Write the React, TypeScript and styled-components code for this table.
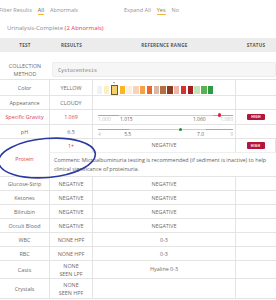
import React from 'react';
import styled, { createGlobalStyle } from 'styled-components';

const COLS = '50px 43px 143px 40px';
const LINE = '#e4e4e4';
const RED = '#e23a52';

const GlobalStyle = createGlobalStyle`
  html, body {
    margin: 0;
    padding: 0;
    background: #ffffff;
  }
  body {
    font-family: 'Open Sans', 'Liberation Sans', sans-serif;
    width: 276px;
    height: 300px;
    overflow: hidden;
  }
`;

const SWATCHES = [
  '#eef4ef',
  '#fcf0c2',
  '#f4d06a',
  '#f9b628',
  '#fdeee2',
  '#f9d3b6',
  '#f6a143',
  '#e6682f',
  '#d8b9a5',
  '#b5703f',
  '#8b3b1f',
  '#f0b6ae',
  '#d8312e',
  '#a61e24',
  '#c4e3b8',
  '#5ab152',
  '#2f9b46',
];
const SELECTED = 2;

type Seg = { w: number; c: string };
type Mark = { t: string; at: number; faint?: boolean; edge?: 'left' | 'right' };

const simpleRows = [
  { test: 'Glucose-Strip', result: 'NEGATIVE', ref: 'NEGATIVE' },
  { test: 'Ketones', result: 'NEGATIVE', ref: 'NEGATIVE' },
  { test: 'Bilirubin', result: 'NEGATIVE', ref: 'NEGATIVE' },
  { test: 'Occult Blood', result: 'NEGATIVE', ref: 'NEGATIVE' },
  { test: 'WBC', result: 'NONE HPF', ref: '0-3' },
  { test: 'RBC', result: 'NONE HPF', ref: '0-3' },
];

const Gauge = ({
  segs,
  dot,
  dotColor,
  marks,
}: {
  segs: Seg[];
  dot: number;
  dotColor: string;
  marks: Mark[];
}) => (
  <GaugeBox>
    <Track>
      {segs.map((s, i) => (
        <TrackSeg key={i} $color={s.c} style={{ width: `${s.w}%` }} />
      ))}
    </Track>
    <Dot $color={dotColor} style={{ left: `${dot}%` }} />
    {marks.map((m) => (
      <GaugeLabel
        key={m.t}
        $faint={m.faint}
        $edge={m.edge}
        style={{ left: `${m.at}%` }}
      >
        {m.t}
      </GaugeLabel>
    ))}
  </GaugeBox>
);

const App = () => {
  return (
    <Page>
      <GlobalStyle />
      <TopBar>
        <Group>
          <FilterText>Filter Results</FilterText>
          <FilterText $active>All</FilterText>
          <FilterText>Abnormals</FilterText>
        </Group>
        <Group>
          <FilterText>Expand All</FilterText>
          <FilterText $active $accent>
            Yes
          </FilterText>
          <FilterText>No</FilterText>
        </Group>
      </TopBar>
      <Title>
        Urinalysis-Complete <span>(2 Abnormals)</span>
      </Title>

      <Table>
        <HeadRow>
          <HeadCell>Test</HeadCell>
          <HeadCell>Results</HeadCell>
          <HeadCell>Reference Range</HeadCell>
          <HeadCell>Status</HeadCell>
        </HeadRow>

        <MethodRow>
          <Cell>
            COLLECTION
            <br />
            METHOD
          </Cell>
          <MethodInput>Cystocentesis</MethodInput>
        </MethodRow>

        <Row $h={16}>
          <Cell>Color</Cell>
          <Cell>YELLOW</Cell>
          <Cell $start>
            <SwatchRow>
              {SWATCHES.map((c, i) => (
                <Swatch key={c} $color={c} $selected={i === SELECTED}>
                  {i === SELECTED && <Caret />}
                </Swatch>
              ))}
            </SwatchRow>
          </Cell>
          <Cell />
        </Row>

        <Row>
          <Cell>Appearance</Cell>
          <Cell>CLOUDY</Cell>
          <Cell />
          <Cell />
        </Row>

        <Row $h={15}>
          <Cell $red>Specific Gravity</Cell>
          <Cell $red>1.069</Cell>
          <Cell $start>
            <Gauge
              segs={[
                { w: 15.5, c: '#ea8a94' },
                { w: 69.5, c: '#b9dcb3' },
                { w: 15, c: '#ea8a94' },
              ]}
              dot={90}
              dotColor="#e0223c"
              marks={[
                { t: '1.000', at: 0, faint: true, edge: 'left' },
                { t: '1.015', at: 21 },
                { t: '1.060', at: 75 },
                { t: '1.080', at: 100, faint: true, edge: 'right' },
              ]}
            />
          </Cell>
          <Cell>
            <Badge>HIGH</Badge>
          </Cell>
        </Row>

        <Row>
          <Cell>pH</Cell>
          <Cell>6.5</Cell>
          <Cell $start>
            <Gauge
              segs={[
                { w: 23, c: '#ea8a94' },
                { w: 57, c: '#b9dcb3' },
                { w: 20, c: '#ea8a94' },
              ]}
              dot={61}
              dotColor="#2a8a36"
              marks={[
                { t: '4', at: 0, faint: true, edge: 'left' },
                { t: '5.5', at: 22 },
                { t: '7.0', at: 76 },
                { t: '9', at: 100, faint: true, edge: 'right' },
              ]}
            />
          </Cell>
          <Cell />
        </Row>

        <ProteinRow>
          <ProteinName>Protein</ProteinName>
          <Cell $red>1+</Cell>
          <Cell $top>NEGATIVE</Cell>
          <Cell>
            <Badge>HIGH</Badge>
          </Cell>
          <Comment>
            Comment: Microalbuminuria testing is recommended (if sediment is
            inactive) to help
            <br />
            clinical significance of proteinuria.
          </Comment>
        </ProteinRow>

        {simpleRows.map((r) => (
          <Row key={r.test}>
            <Cell>{r.test}</Cell>
            <Cell>{r.result}</Cell>
            <Cell>{r.ref}</Cell>
            <Cell />
          </Row>
        ))}

        <Row $h={18}>
          <Cell>Casts</Cell>
          <Cell>
            NONE
            <br />
            SEEN LPF
          </Cell>
          <Cell $up>Hyaline 0-3</Cell>
          <Cell />
        </Row>

        <Row $h={20}>
          <Cell>Crystals</Cell>
          <Cell>
            NONE
            <br />
            SEEN HPF
          </Cell>
          <Cell />
          <Cell />
        </Row>

        <Circle viewBox="0 0 104 46" aria-hidden>
          <ellipse
            cx="52"
            cy="23"
            rx="48.5"
            ry="19.5"
            transform="rotate(-5 52 23)"
            fill="none"
            stroke="#2b3aa0"
            strokeWidth="1.6"
          />
        </Circle>
      </Table>
    </Page>
  );
};

const Page = styled.div`
  width: 276px;
  height: 300px;
  overflow: hidden;
  background: #ffffff;
`;

const TopBar = styled.div`
  display: flex;
  align-items: center;
  gap: 46px;
  height: 18px;
  padding: 2px 0 0 0;
  box-sizing: border-box;
  margin-left: -1px;
`;

const Group = styled.div`
  display: flex;
  align-items: center;
  gap: 6px;
`;

const FilterText = styled.span<{ $active?: boolean; $accent?: boolean }>`
  font-size: 5.5px;
  line-height: 8px;
  color: ${({ $active, $accent }) =>
    $accent ? '#a8741c' : $active ? '#666666' : '#939393'};
  border-bottom: 1px solid
    ${({ $active }) => ($active ? '#f2b441' : 'transparent')};
`;

const Title = styled.div`
  height: 20px;
  padding: 3px 0 0 7px;
  box-sizing: border-box;
  font-size: 6px;
  line-height: 14px;
  color: #8d8d8d;

  span {
    color: ${RED};
  }
`;

const Table = styled.div`
  position: relative;
  width: 276px;
`;

const HeadRow = styled.div`
  display: grid;
  grid-template-columns: ${COLS};
  align-items: center;
  height: 14px;
  background: #ececec;
`;

const HeadCell = styled.div`
  text-align: center;
  text-transform: uppercase;
  font-size: 4.6px;
  font-weight: 700;
  letter-spacing: 0.25px;
  color: #595959;
`;

const Row = styled.div<{ $h?: number }>`
  display: grid;
  grid-template-columns: ${COLS};
  height: ${({ $h }) => $h ?? 14}px;
  border-bottom: 1px solid ${LINE};
  box-sizing: border-box;
`;

const Cell = styled.div<{
  $red?: boolean;
  $start?: boolean;
  $top?: boolean;
  $up?: boolean;
}>`
  display: flex;
  flex-direction: column;
  align-items: ${({ $start }) => ($start ? 'flex-start' : 'center')};
  justify-content: ${({ $top, $up }) =>
    $top ? 'flex-start' : $up ? 'flex-start' : 'center'};
  padding: ${({ $top, $up }) =>
    $top ? '2px 2px 0' : $up ? '4px 2px 0' : '0 2px'};
  text-align: center;
  border-right: 1px solid ${LINE};
  font-size: 5.4px;
  line-height: 8px;
  color: ${({ $red }) => ($red ? RED : '#6a6a6a')};

  &:last-child {
    border-right: none;
  }
`;

const MethodRow = styled.div`
  display: grid;
  grid-template-columns: 50px 1fr;
  height: 28px;
  padding-top: 9px;
  border-bottom: 1px solid ${LINE};
  box-sizing: border-box;

  & > ${Cell} {
    border-right: none;
  }
`;

const MethodInput = styled.div`
  margin: 1px 0 2px 2px;
  padding: 0 5px;
  display: flex;
  align-items: center;
  background: #f6f6f6;
  border: 1px solid #ececec;
  border-radius: 2px;
  font-family: 'DejaVu Sans Mono', 'Liberation Mono', monospace;
  font-size: 5px;
  color: #707070;
`;

const SwatchRow = styled.div`
  display: flex;
  align-items: center;
  gap: 1.5px;
  padding: 4px 0 0 2px;
`;

const Swatch = styled.div<{ $color: string; $selected?: boolean }>`
  position: relative;
  width: ${({ $selected }) => ($selected ? 5.6 : 5.3)}px;
  height: 8px;
  background: ${({ $color }) => $color};
  box-shadow: ${({ $selected }) => ($selected ? '0 0 0 1px #6b5a2c' : 'none')};
  margin: ${({ $selected }) => ($selected ? '0 1px' : '0')};
`;

const Caret = styled.span`
  position: absolute;
  left: 50%;
  top: -4px;
  margin-left: -1.5px;
  width: 0;
  height: 0;
  border-left: 1.5px solid transparent;
  border-right: 1.5px solid transparent;
  border-top: 2px solid #9a9a9a;
`;

const GaugeBox = styled.div`
  position: relative;
  width: 135px;
  height: 13px;
  margin-left: 3px;
`;

const Track = styled.div`
  position: absolute;
  left: 0;
  right: 0;
  top: 4px;
  display: flex;
  height: 1px;
`;

const TrackSeg = styled.div<{ $color: string }>`
  height: 1px;
  background: ${({ $color }) => $color};
`;

const Dot = styled.div<{ $color: string }>`
  position: absolute;
  top: 2.8px;
  width: 3.4px;
  height: 3.4px;
  margin-left: -1.7px;
  border-radius: 50%;
  background: ${({ $color }) => $color};
`;

const GaugeLabel = styled.span<{ $faint?: boolean; $edge?: 'left' | 'right' }>`
  position: absolute;
  top: 5.5px;
  font-size: 5px;
  line-height: 7px;
  white-space: nowrap;
  color: ${({ $faint }) => ($faint ? '#c4c4c4' : '#666666')};
  transform: ${({ $edge }) =>
    $edge === 'left'
      ? 'none'
      : $edge === 'right'
      ? 'translateX(-100%)'
      : 'translateX(-50%)'};
`;

const Badge = styled.span`
  display: inline-flex;
  align-items: center;
  justify-content: center;
  width: 18px;
  height: 6.5px;
  border-radius: 1px;
  background: #b3163c;
  color: #ffffff;
  font-size: 3.4px;
  font-weight: 700;
  letter-spacing: 0.2px;
`;

const ProteinRow = styled.div`
  display: grid;
  grid-template-columns: ${COLS};
  grid-template-rows: 13px 24px;
  border-bottom: 1px solid ${LINE};
`;

const ProteinName = styled(Cell)`
  grid-row: 1 / 3;
  color: ${RED};
  padding-top: 3px;
`;

const Comment = styled.div`
  grid-column: 2 / 5;
  padding: 3px 0 0 4px;
  border-top: 1px solid #efefef;
  font-size: 5.4px;
  line-height: 9px;
  color: #5e5e5e;
  white-space: nowrap;
  overflow: hidden;
`;

const Circle = styled.svg`
  position: absolute;
  left: -5px;
  top: 97px;
  width: 104px;
  height: 46px;
  overflow: visible;
  pointer-events: none;
`;

export default App;
